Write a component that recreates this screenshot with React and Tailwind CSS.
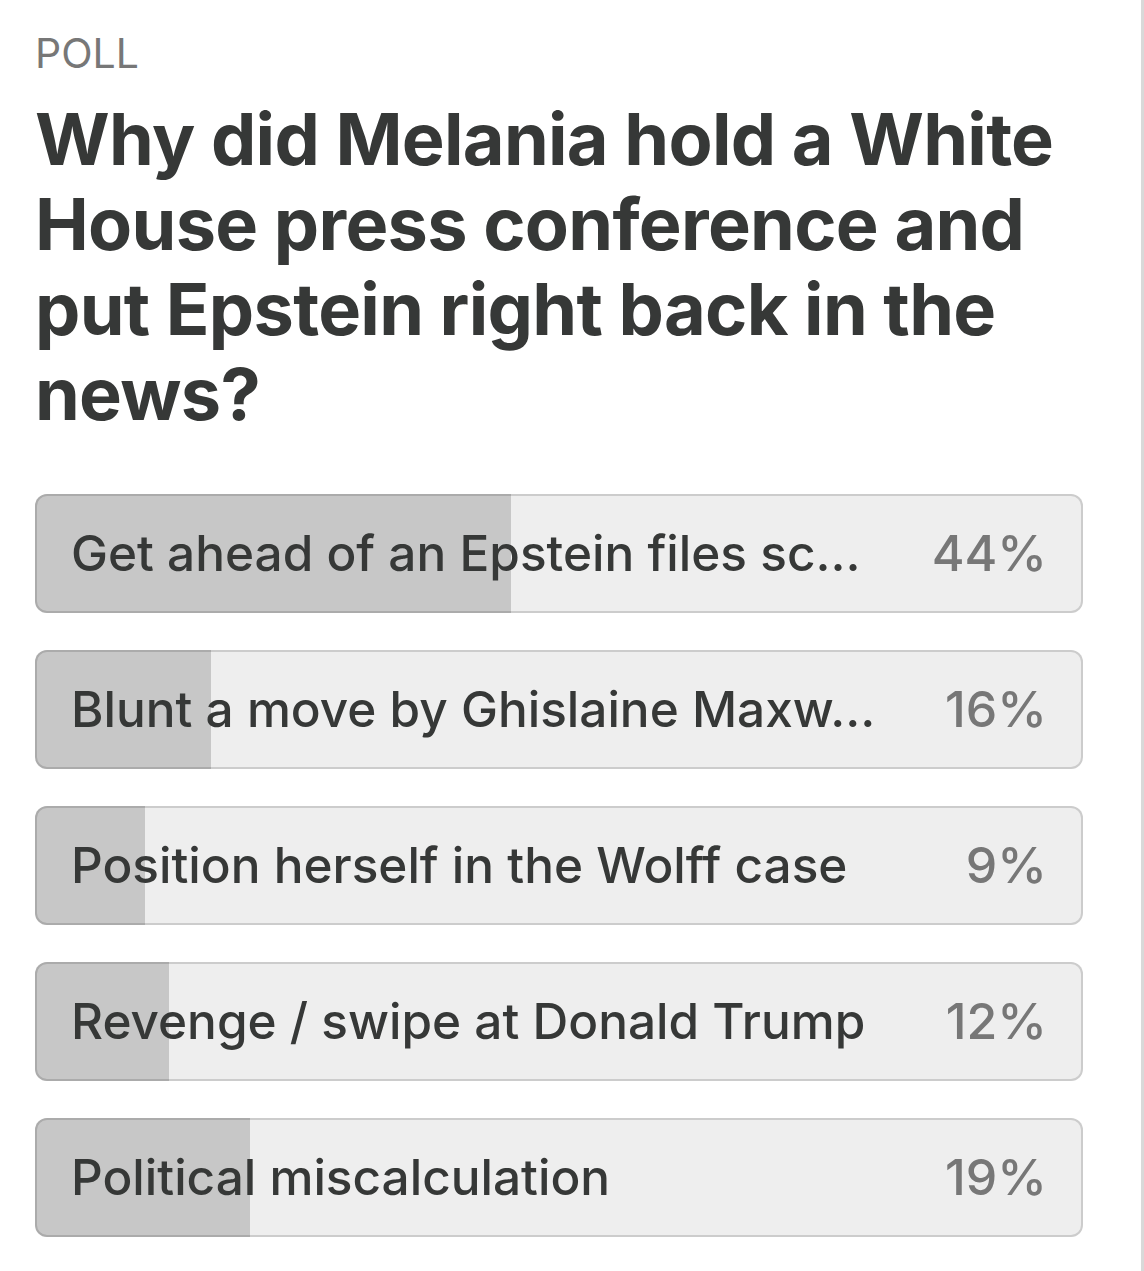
import React from "react";

const options = [
  { label: "Get ahead of an Epstein files sc…", pct: "44%", fill: 45.4 },
  { label: "Blunt a move by Ghislaine Maxw…", pct: "16%", fill: 16.8 },
  { label: "Position herself in the Wolff case", pct: "9%", fill: 10.5 },
  { label: "Revenge / swipe at Donald Trump", pct: "12%", fill: 12.8 },
  { label: "Political miscalculation", pct: "19%", fill: 20.5 },
];

function PollOption({ label, pct, fill }) {
  return (
    <div className="relative h-[119px] rounded-[12px] bg-[#cccccc] p-[2px] overflow-hidden">
      <div className="h-full rounded-[10px] bg-[#eeeeee]" />
      {/* filled share of the vote */}
      <div
        className="absolute inset-y-0 left-0 bg-[rgba(0,0,0,0.16)]"
        style={{ width: `${fill}%` }}
      />
      <div className="absolute inset-0 flex items-center justify-between pl-[36px] pr-[36px]">
        <span className="truncate text-[49.5px] font-medium text-[#363837]">{label}</span>
        <span className="ml-6 shrink-0 text-[50px] font-medium text-[#777777]">{pct}</span>
      </div>
    </div>
  );
}

export default function App() {
  return (
    <div
      className="min-h-[1271px] w-full bg-white border-r-[3px] border-[#d9d9d9]"
      style={{ fontFamily: "Inter, 'Noto Sans', 'Liberation Sans', sans-serif" }}
    >
      <div className="pl-[35px] pr-[58px] pt-[28px]">
        <div className="text-[41px] leading-[50px] text-[#777777]">POLL</div>
        <h1 className="mt-[18px] text-[72px] font-bold leading-[85px] tracking-[-0.7px] text-[#363837]">
          Why did Melania hold a White House press conference and put Epstein right back in the
          news?
        </h1>
        <div className="mt-[58px] flex flex-col gap-[37px]">
          {options.map((o) => (
            <PollOption key={o.label} {...o} />
          ))}
        </div>
      </div>
    </div>
  );
}
